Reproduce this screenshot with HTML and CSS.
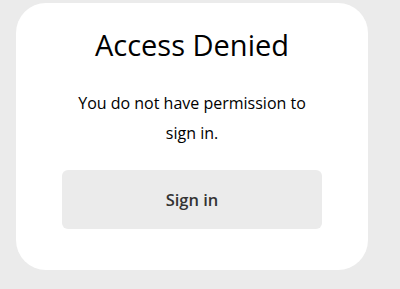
FILE: index.html
```html
<!DOCTYPE html>
<html>
<head>
<meta charset="utf-8">
<link rel="stylesheet" href="styles.css">
</head>
<body>
<div class="card">
  <h1 class="title">Access Denied</h1>
  <p class="message">You do not have permission to sign in.</p>
  <button class="signin">Sign in</button>
</div>
</body>
</html>
```

FILE: styles.css
```css
html, body {
  margin: 0;
  padding: 0;
  background: #ebebeb;
}
body {
  font-family: "Open Sans", "Noto Sans", sans-serif;
  color: #000;
  padding: 3px 32px 0 16px;
}
.card {
  background: #fff;
  border-radius: 30px;
  height: 267px;
  box-sizing: border-box;
  padding: 23px 46px 0;
  display: flex;
  flex-direction: column;
  align-items: center;
}
.title {
  margin: 0;
  font-size: 29px;
  font-weight: 400;
  line-height: 38px;
  text-align: center;
}
.message {
  margin: 24px 0 0;
  width: 250px;
  font-size: 16px;
  line-height: 30px;
  text-align: center;
}
.signin {
  margin-top: 22px;
  width: 260px;
  height: 59px;
  border: none;
  border-radius: 6px;
  background: #ebebeb;
  color: #333;
  font-family: "Open Sans", "Noto Sans", sans-serif;
  font-size: 16.5px;
  font-weight: 600;
}
```
